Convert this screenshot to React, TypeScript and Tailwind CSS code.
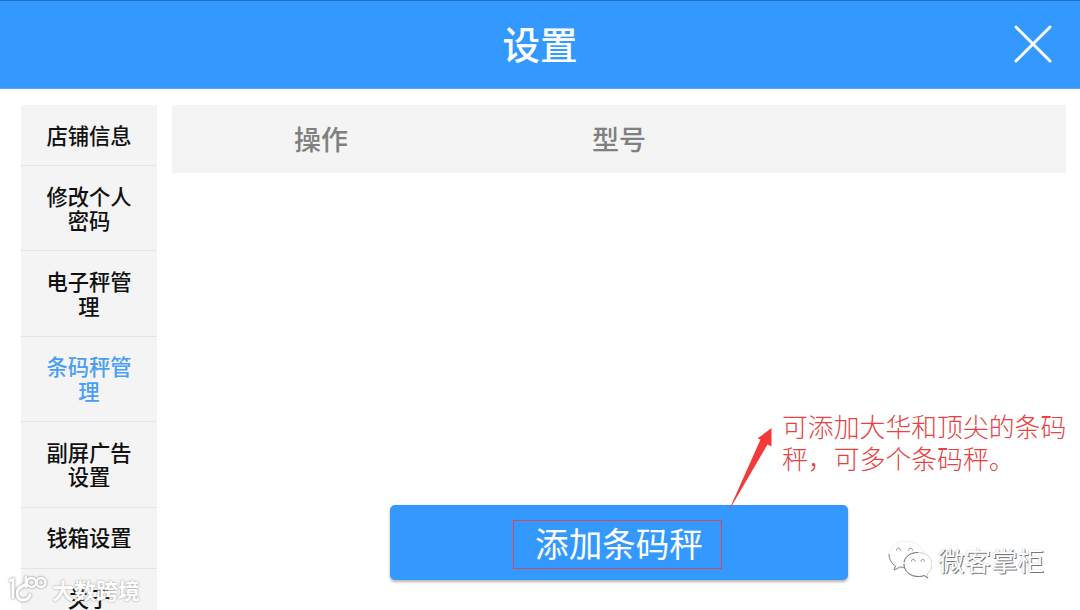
import React, { useState } from "react";
import clsx from "clsx";

const menuItems = [
  { id: 0, lines: ["店铺信息"] },
  { id: 1, lines: ["修改个人", "密码"] },
  { id: 2, lines: ["电子秤管", "理"] },
  { id: 3, lines: ["条码秤管", "理"] },
  { id: 4, lines: ["副屏广告", "设置"] },
  { id: 5, lines: ["钱箱设置"] },
  { id: 6, lines: ["关于"] },
];

const columns = ["操作", "型号", ""];

const Header = () => (
  <header className="relative flex h-[89px] shrink-0 items-center justify-center border-t border-[#1b72c4] border-b border-b-[#5fa5ea] bg-[#3399ff] pb-[3px]">
    <h1 className="text-[37.5px] leading-none font-medium text-white">设置</h1>
    <button className="absolute top-[24px] right-[28px]" aria-label="close">
      <svg width="38" height="38" viewBox="0 0 38 38" fill="none" stroke="#fff" strokeWidth="3" strokeLinecap="round">
        <path d="M2 2 36 36M36 2 2 36" />
      </svg>
    </button>
  </header>
);

const Sidebar = () => {
  const [activeId, setActiveId] = useState(3);

  return (
    <nav className="flex w-[136px] shrink-0 flex-col bg-[#f4f4f4]">
      {menuItems.map((item) => (
        <button
          key={item.id}
          onClick={() => setActiveId(item.id)}
          className={clsx(
            "flex shrink-0 flex-col items-center justify-center border-b border-[#e3e3e3] text-[21.3px] leading-[24.6px] font-medium",
            item.lines.length > 1 ? "h-[85.4px]" : "h-[61px]",
            activeId === item.id ? "text-[#4a9ff5]" : "text-[#111]"
          )}
        >
          {item.lines.map((line) => (
            <span key={line}>{line}</span>
          ))}
        </button>
      ))}
    </nav>
  );
};

const Note = () => (
  <>
    <svg className="absolute top-[427px] left-[728px]" width="46" height="84" viewBox="0 0 46 84" fill="#f23a3a">
      <path d="M1 83 32.5 12.500 29.500 11.500 43.500 1 43.500 19.500 39.500 17.500 3 80Z" />
    </svg>
    <p className="absolute top-[410px] left-[782px] text-[25.85px] leading-[32px] font-light whitespace-nowrap text-[#e8413f]">
      可添加大华和顶尖的条码
      <br />
      秤，可多个条码秤。
    </p>
  </>
);

const WechatMark = () => (
  <div className="absolute top-[539px] left-[887px] flex items-center gap-[6px]">
    <svg width="45" height="42" viewBox="0 0 45 42" fill="#fff" strokeLinejoin="round">
      <path
        d="M19 2C9 2 2 8 2 16c0 5 2.500 8.500 6.500 11L7 32l6-3c8 2 25-1 24-13C36 8 29 2 19 2Z"
        stroke="#e6e6e6"
        strokeWidth="0.700"
      />
      <path d="M2 15c0 5 2.500 9.500 6.500 12L7 31l6-3 5 .5" fill="none" stroke="#858585" strokeWidth="1" />
      <path
        d="M31 13.500c-8 0-14 5-14 12s6 12 14 12c2 0 4 0 6-1l4 2.500-1-4c3-2.500 5-5.500 5-9.500 0-7-6-12-14-12Z"
        stroke="#bbb"
        strokeWidth="0.700"
      />
      <path d="M17 25c0 7 6 12.500 14 12.500 2 0 4 0 6-1l4 2.500M17 23c1-6 7-9.500 14-9.500" fill="none" stroke="#777" strokeWidth="1" />
      <g fill="none" stroke="#888" strokeWidth="1">
        <path d="M9.500 11.500c0-3 4-3 4 0M21.500 11.500c0-3 4-3 4 0M24.500 22.500c0-3 3.500-3 3.500 0M34 22.500c0-3 3.500-3 3.500 0" />
      </g>
    </svg>
    <span className="text-[26.5px] leading-[42px] text-white [text-shadow:1px_1px_0_#777,0_0_1px_#999]">
      微客掌柜
    </span>
  </div>
);

const CornerMark = () => (
  <div className="absolute top-[574px] left-[8px] flex items-center gap-[4px] text-white">
    <svg className="drop-shadow-[0_0_1px_#777]" width="40" height="30" viewBox="0 0 40 30" fill="none" stroke="#fff" strokeWidth="3" strokeLinecap="round">
      <path d="M2.500 6.500 5 5.500v18M12 13C6 19 10 26 15 26c4 0 6-2 7-5M11 15l5-4M18 3.500v9" />
      <circle cx="23.500" cy="8.500" r="4.500" strokeWidth="2.500" />
      <circle cx="33" cy="8.500" r="4.500" strokeWidth="2.500" />
    </svg>
    <span className="text-[22px] leading-[30px] font-bold [text-shadow:0_0_2px_#888]">大数跨境</span>
  </div>
);

const App = () => {
  return (
    <div className="relative flex h-[610px] w-[1080px] flex-col overflow-hidden bg-white font-['Noto_Sans_CJK_SC',sans-serif]">
      <Header />
      <div className="flex min-h-0 flex-1 gap-[15px] pt-4 pr-[14px] pl-[21px]">
        <Sidebar />
        <main className="flex flex-1 flex-col items-center justify-between pb-[30px]">
          <div className="grid h-[68px] w-full grid-cols-3 items-center bg-[#f4f4f4] pb-[1px] text-center text-[27px] leading-none font-medium text-[#808080]">
            {columns.map((column, index) => (
              <span key={index}>{column}</span>
            ))}
          </div>
          <button className="flex h-[75px] w-[458px] items-center justify-center rounded-[5px] bg-[#3399ff] pt-[4px] pr-[3px] shadow-[0_2px_3px_rgba(0,0,0,0.3)]">
            <span className="flex h-[49px] w-[209px] items-center justify-center border border-[#d64560] pb-[4px] pl-[3px] text-[33.6px] leading-none text-white">
              添加条码秤
            </span>
          </button>
        </main>
      </div>
      <Note />
      <WechatMark />
      <CornerMark />
    </div>
  );
};

export default App;
